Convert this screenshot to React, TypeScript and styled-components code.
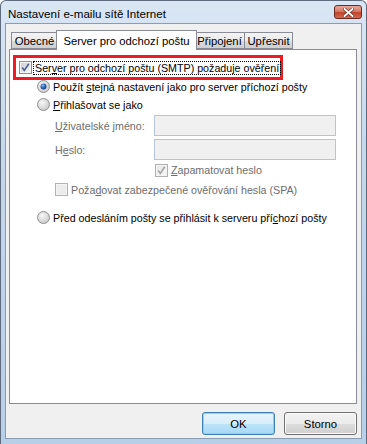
import styled, { createGlobalStyle } from 'styled-components';

const GlobalStyle = createGlobalStyle`
  body {
    margin: 0;
    font-family: "Liberation Sans", Arial, sans-serif;
    font-size: 10.7px;
  }
  svg {
    flex-shrink: 0;
    display: block;
  }
`;

const Window = styled.div`
  width: 367px;
  height: 444px;
  box-sizing: border-box;
  display: flex;
  flex-direction: column;
  background: linear-gradient(180deg, #d9e6f4 0%, #c3d6ec 40%, #b8cfe8 100%);
  border: 1px solid #5d6b7c;
  border-bottom: none;
  border-radius: 6px 6px 0 0;
  padding: 0 4px 5px 4px;
`;

const TitleBar = styled.div`
  height: 22px;
  display: flex;
  align-items: flex-start;
  justify-content: space-between;
`;

const Title = styled.div`
  padding: 6px 0 0 3px;
  color: #000;
  font-size: 11.6px;
`;

const CloseButton = styled.div`
  margin-top: 4px;
  width: 28px;
  height: 14px;
  box-sizing: border-box;
  border: 1px solid #6b2a22;
  border-radius: 3px;
  background: linear-gradient(180deg, #e9a99a 0%, #d47a66 45%, #c0432b 55%, #d26a4e 100%);
  display: flex;
  align-items: center;
  justify-content: center;
`;

const Client = styled.div`
  flex: 1;
  display: flex;
  flex-direction: column;
  background: #f0f0f0;
  border: 1px solid #8a9cb2;
  padding: 6px 3px 0 3px;
`;

const TabStrip = styled.div`
  height: 19px;
  display: flex;
  align-items: flex-end;
  padding-left: 2px;
  position: relative;
  z-index: 1;
`;

const Tab = styled.div<{ $active?: boolean; $w: number }>`
  width: ${p => p.$w}px;
  height: ${p => (p.$active ? 20 : 17)}px;
  box-sizing: border-box;
  margin-bottom: ${p => (p.$active ? -1 : 0)}px;
  margin-left: ${p => (p.$active ? -2 : 0)}px;
  margin-right: ${p => (p.$active ? -2 : 0)}px;
  border: 1px solid #898c95;
  border-bottom: ${p => (p.$active ? 'none' : '1px solid #898c95')};
  border-left: ${p => (p.$active ? '1px solid #898c95' : 'none')};
  background: ${p =>
    p.$active ? '#ffffff' : 'linear-gradient(180deg, #f3f3f3 0%, #ebebeb 50%, #dcdcdc 51%, #cfcfcf 100%)'};
  display: flex;
  align-items: center;
  justify-content: center;
  padding-top: ${p => (p.$active ? 0 : 1)}px;
  color: #000;
  font-size: 11.3px;
  position: relative;
  z-index: ${p => (p.$active ? 2 : 1)};
  &:first-child {
    border-left: 1px solid #898c95;
  }
`;

const Panel = styled.div`
  width: 348px;
  height: 355px;
  box-sizing: border-box;
  border: 1px solid #898c95;
  background: #fff;
  padding: 5px 0 0 3px;
  display: flex;
  flex-direction: column;
`;

const Highlight = styled.div`
  width: 270px;
  height: 25px;
  box-sizing: border-box;
  border: 3px solid #ec1c24;
  display: flex;
  align-items: center;
  padding-left: 3px;
`;

const Row = styled.div<{ $h: number; $top: number; $indent: number }>`
  height: ${p => p.$h}px;
  margin-top: ${p => p.$top}px;
  padding-left: ${p => p.$indent}px;
  display: flex;
  align-items: center;
`;

const Label = styled.span<{ $disabled?: boolean }>`
  color: ${p => (p.$disabled ? '#6d6d6d' : '#000')};
  white-space: nowrap;
`;

const FocusLabel = styled(Label)`
  outline: 1px dotted #000;
  outline-offset: 0;
  padding: 0 1px;
  margin-left: 2px;
`;

const FieldLabel = styled(Label)`
  width: 99px;
`;

const Field = styled.div`
  width: 182px;
  height: 21px;
  box-sizing: border-box;
  border: 1px solid #b5c4d6;
  background: #f0f0f0;
`;

const Gap = styled.span`
  display: inline-block;
  width: 3px;
  flex-shrink: 0;
`;

const U = styled.span`
  text-decoration: underline;
`;

const Footer = styled.div`
  display: flex;
  justify-content: flex-end;
  gap: 9px;
  padding: 8px 0 0 0;
  width: 348px;
`;

const Button = styled.div<{ $default?: boolean }>`
  width: 73px;
  height: 23px;
  box-sizing: border-box;
  border: 1px solid ${p => (p.$default ? '#3c7fb1' : '#707070')};
  border-radius: 3px;
  box-shadow: ${p => (p.$default ? 'inset 0 0 0 1px #8fd0f5' : 'inset 0 0 0 1px #fbfbfb')};
  background: ${p =>
    p.$default
      ? 'linear-gradient(180deg, #e5f4fc 0%, #d9eefa 50%, #bde4fa 51%, #a7d9f5 100%)'
      : 'linear-gradient(180deg, #f2f2f2 0%, #ebebeb 50%, #dddddd 51%, #cfcfcf 100%)'};
  display: flex;
  align-items: center;
  justify-content: center;
  color: #000;
  font-size: 11.3px;
`;

const Checkbox = ({ disabled }: { disabled?: boolean }) => (
  <svg width="13" height="13" viewBox="0 0 13 13">
    <defs>
      <linearGradient id={disabled ? 'cbd' : 'cb'} x1="0" y1="0" x2="1" y2="1">
        <stop offset="0" stopColor={disabled ? '#e6e6e6' : '#cbcfd5'} />
        <stop offset="1" stopColor={disabled ? '#f7f7f7' : '#f6f6f6'} />
      </linearGradient>
    </defs>
    <rect x="0.5" y="0.5" width="12" height="12" fill="#f4f4f4" stroke={disabled ? '#b1b1b1' : '#8e8f8f'} />
    <rect x="2" y="2" width="9" height="9" fill={`url(#${disabled ? 'cbd' : 'cb'})`} />
    <path
      d="M3.2 6.6 L5.3 9.4 L9.8 2.8"
      fill="none"
      stroke={disabled ? '#a6a6a6' : '#4b5f95'}
      strokeWidth="1.6"
    />
  </svg>
);

const EmptyCheckbox = () => (
  <svg width="13" height="13" viewBox="0 0 13 13">
    <rect x="0.5" y="0.5" width="12" height="12" fill="#f4f4f4" stroke="#b1b1b1" />
    <rect x="2" y="2" width="9" height="9" fill="#ececec" />
  </svg>
);

const Radio = ({ checked, id }: { checked?: boolean; id: string }) => (
  <svg width="13" height="13" viewBox="0 0 13 13">
    <defs>
      <radialGradient id={`rg${id}`} cx="0.4" cy="0.35" r="0.7">
        <stop offset="0" stopColor="#f8f8f8" />
        <stop offset="1" stopColor="#c8c8c8" />
      </radialGradient>
      <radialGradient id={`rd${id}`} cx="0.4" cy="0.35" r="0.7">
        <stop offset="0" stopColor="#8fc6f2" />
        <stop offset="0.5" stopColor="#2b66b8" />
        <stop offset="1" stopColor="#163a78" />
      </radialGradient>
    </defs>
    <circle cx="6.5" cy="6.5" r="6" fill={`url(#rg${id})`} stroke="#8e8f8f" />
    {checked && <circle cx="6.5" cy="6.5" r="3" fill={`url(#rd${id})`} />}
  </svg>
);

export default function App() {
  return (
    <>
      <GlobalStyle />
      <Window>
        <TitleBar>
          <Title>Nastavení e-mailu sítě Internet</Title>
          <CloseButton>
            <svg width="11" height="9" viewBox="0 0 11 9">
              <path d="M1.5 1 L9.5 8 M9.5 1 L1.5 8" stroke="#5a1e16" strokeWidth="3.2" strokeLinecap="round" />
              <path d="M1.5 1 L9.5 8 M9.5 1 L1.5 8" stroke="#ffffff" strokeWidth="2" strokeLinecap="round" />
            </svg>
          </CloseButton>
        </TitleBar>
        <Client>
          <TabStrip>
            <Tab $w={47}>Obecné</Tab>
            <Tab $active $w={141}>Server pro odchozí poštu</Tab>
            <Tab $w={50}>Připojení</Tab>
            <Tab $w={48}>Upřesnit</Tab>
          </TabStrip>
          <Panel>
            <Highlight>
              <Checkbox />
              <FocusLabel>
                Ser<U>v</U>er pro odchozí poštu (SMTP) požaduje ověření
              </FocusLabel>
            </Highlight>
            <Row $h={17} $top={-2} $indent={24}>
              <Radio checked id="a" />
              <Gap />
              <Label>
                Použít <U>s</U>tejná nastavení jako pro server příchozí pošty
              </Label>
            </Row>
            <Row $h={17} $top={1} $indent={24}>
              <Radio id="b" />
              <Gap />
              <Label>
                <U>P</U>řihlašovat se jako
              </Label>
            </Row>
            <Row $h={21} $top={2} $indent={42}>
              <FieldLabel $disabled>
                <U>U</U>živatelské jméno:
              </FieldLabel>
              <Field />
            </Row>
            <Row $h={21} $top={3} $indent={42}>
              <FieldLabel $disabled>
                H<U>e</U>slo:
              </FieldLabel>
              <Field />
            </Row>
            <Row $h={16} $top={2} $indent={142}>
              <Checkbox disabled />
              <Gap />
              <Label $disabled>
                <U>Z</U>apamatovat heslo
              </Label>
            </Row>
            <Row $h={17} $top={3} $indent={42}>
              <EmptyCheckbox />
              <Gap />
              <Label $disabled>
                Poža<U>d</U>ovat zabezpečené ověřování hesla (SPA)
              </Label>
            </Row>
            <Row $h={17} $top={11} $indent={24}>
              <Radio id="c" />
              <Gap />
              <Label>
                Před odesláním pošty se přihlásit k serveru pří<U>c</U>hozí pošty
              </Label>
            </Row>
          </Panel>
          <Footer>
            <Button $default>OK</Button>
            <Button>Storno</Button>
          </Footer>
        </Client>
      </Window>
    </>
  );
}
